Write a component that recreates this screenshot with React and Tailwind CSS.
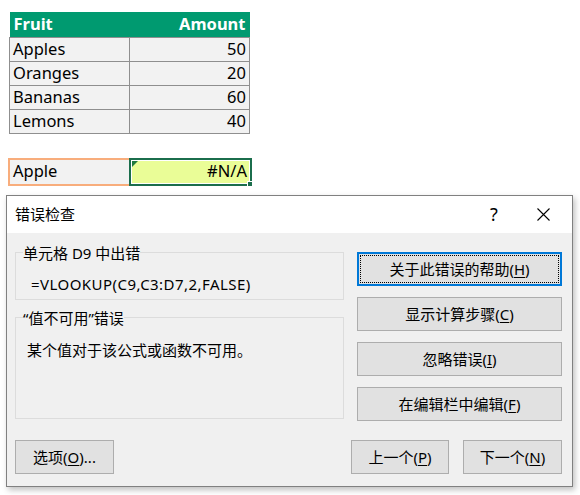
import React from "react"

const rows = [
    { fruit: "Apples", amount: 50 },
    { fruit: "Oranges", amount: 20 },
    { fruit: "Bananas", amount: 60 },
    { fruit: "Lemons", amount: 40 },
]

const uiFont = { fontFamily: '"Noto Sans", "Noto Sans CJK SC", sans-serif' }

function Key({ label, k, rest = "" }) {
    return (
        <span>
            {label}(<span className="underline underline-offset-2">{k}</span>){rest}
        </span>
    )
}

function Btn({ children, className = "" }) {
    return (
        <button className={`h-[34px] bg-[#e1e1e1] border border-[#adadad] text-[15px] text-black flex items-center justify-center ${className}`}>
            {children}
        </button>
    )
}

export default function App() {
    return (
        <div className="w-[580px] h-[495px] bg-white overflow-hidden pt-[12px]" style={uiFont}>
            {/* sheet */}
            <table className="ml-[9px] w-[241px] border-collapse text-[16.5px] text-black">
                <thead>
                    <tr className="h-[24px] bg-[#009a70] text-white font-bold">
                        <th className="w-[120px] text-left pl-[4px] font-bold">Fruit</th>
                        <th className="text-right pr-[4px] font-bold">Amount</th>
                    </tr>
                </thead>
                <tbody>
                    {rows.map((r) => (
                        <tr key={r.fruit} className="h-[24px] bg-[#f2f2f2]">
                            <td className="border border-[#8f8f8f] pl-[3px] leading-none">{r.fruit}</td>
                            <td className="border border-[#8f8f8f] pr-[3px] text-right leading-none">{r.amount}</td>
                        </tr>
                    ))}
                </tbody>
            </table>

            <div className="flex ml-[8px] mt-[24px] text-[16.5px] text-black">
                <div className="w-[121px] h-[28px] border-2 border-r-0 border-[#f8ad7c] bg-[#f2f2f2] pl-[3px] flex items-center">Apple</div>
                <div className="relative w-[123px] h-[28px] border-2 border-[#1b6e4c]">
                    <div className="h-full border border-white bg-[#eafd97] flex items-center justify-end pr-[2px]">#N/A</div>
                    <div className="absolute left-[1px] top-[1px] w-0 h-0 border-t-[6px] border-r-[6px] border-t-[#1f7a3e] border-r-transparent" />
                    <div className="absolute -right-[3px] -bottom-[3px] w-[6px] h-[6px] bg-[#1b6e4c] border border-white" />
                </div>
            </div>

            {/* dialog */}
            <div className="ml-[6px] mt-[9px] w-[567px] h-[292px] border border-[#808080] bg-[#f0f0f0] shadow-[2px_3px_6px_rgba(0,0,0,0.25)] text-black text-[15px]">
                <div className="h-[37px] bg-white flex items-center pl-[8px]">
                    <span className="flex-1">错误检查</span>
                    <span className="w-[20px] text-center mr-[33px] text-[18px] leading-none">?</span>
                    <svg width="13" height="13" viewBox="0 0 13 13" className="mr-[22px]">
                        <path d="M0.5 0.5 L12.5 12.5 M12.5 0.5 L0.5 12.5" stroke="#000" strokeWidth="1.1" fill="none" />
                    </svg>
                </div>

                <div className="pl-[8px] pr-[10px] pt-[10px]">
                    <div className="flex gap-[13px]">
                        <div className="w-[329px] flex flex-col gap-[8px]">
                            <fieldset className="h-[57px] border border-[#dcdcdc] px-[15px]">
                                <legend className="-ml-[8px] px-0 leading-[20px]">单元格 D9 中出错</legend>
                                <div className="pt-[11px] leading-[20px] tracking-[0.45px]">=VLOOKUP(C9,C3:D7,2,FALSE)</div>
                            </fieldset>
                            <fieldset className="h-[111px] border border-[#dcdcdc] px-[11px]">
                                <legend className="-ml-[4px] px-0 leading-[20px]">“值不可用”错误</legend>
                                <div className="pt-[12px] leading-[20px]">某个值对于该公式或函数不可用。</div>
                            </fieldset>
                        </div>
                        <div className="w-[205px] mt-[9px] flex flex-col gap-[11px]">
                            <button className="h-[34px] bg-[#e1e1e1] border-2 border-[#0078d7] p-px text-[15px] text-black">
                                <span className="h-full border border-dotted border-black flex items-center justify-center">
                                    <Key label="关于此错误的帮助" k="H" />
                                </span>
                            </button>
                            <Btn><Key label="显示计算步骤" k="C" /></Btn>
                            <Btn><Key label="忽略错误" k="I" /></Btn>
                            <Btn><Key label="在编辑栏中编辑" k="F" /></Btn>
                        </div>
                    </div>

                    <div className="flex mt-[19px]">
                        <Btn className="w-[99px] h-[33px]"><Key label="选项" k="O" rest="..." /></Btn>
                        <div className="flex-1" />
                        <Btn className="w-[98px] h-[33px]"><Key label="上一个" k="P" /></Btn>
                        <Btn className="w-[99px] h-[33px] ml-[14px]"><Key label="下一个" k="N" /></Btn>
                    </div>
                </div>
            </div>
        </div>
    )
}
